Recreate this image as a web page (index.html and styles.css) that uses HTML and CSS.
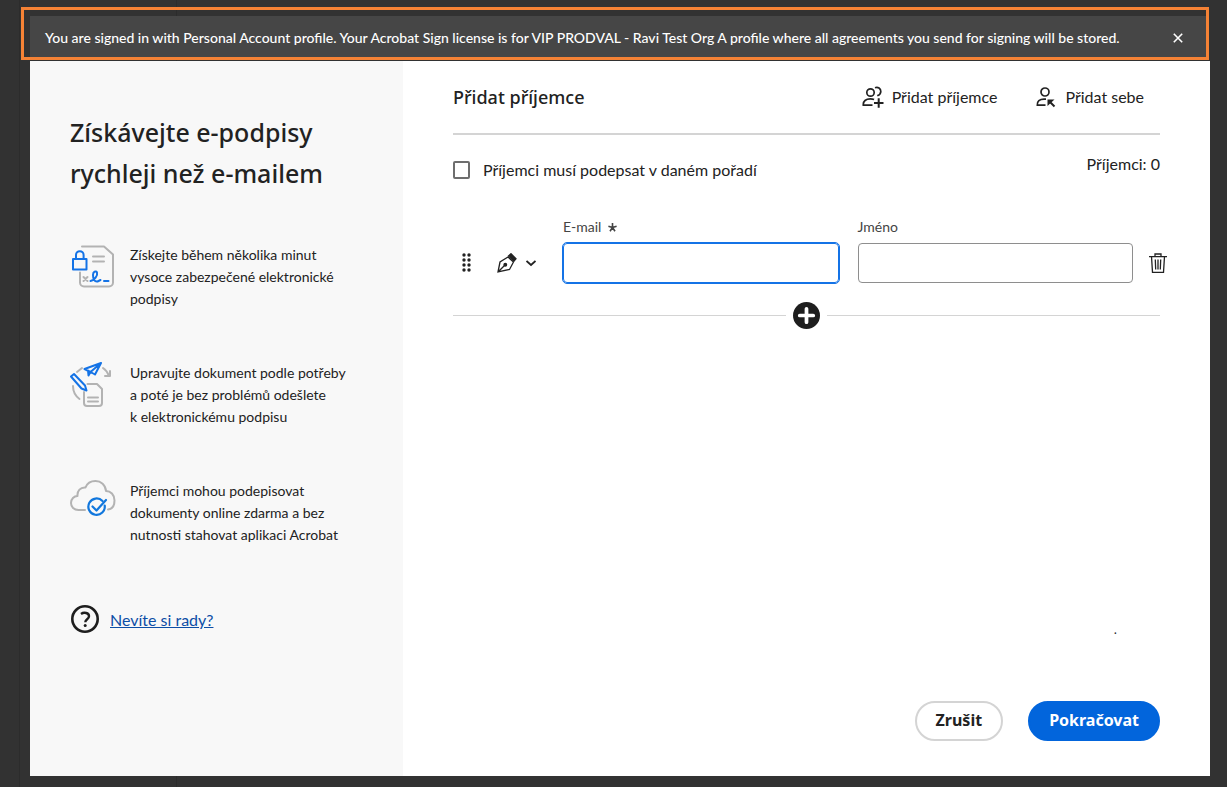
FILE: index.html
```html
<!DOCTYPE html>
<html lang="cs">
<head>
    <meta charset="UTF-8">
    <meta name="viewport" content="width=device-width, initial-scale=1.0">
    <title>Přidat příjemce</title>
    <link rel="stylesheet" href="styles.css">
</head>
<body>
    <div class="notice">
        <div class="notice-bar">
            <p class="notice-text">You are signed in with Personal Account profile. Your Acrobat Sign license is for VIP PRODVAL - Ravi Test Org A profile where all agreements you send for signing will be stored.</p>
            <button class="icon-btn" type="button" aria-label="Close">
                <svg width="10" height="10" viewBox="0 0 10 10" fill="none" stroke="#fff" stroke-width="1.6"><path d="M.8.8l8.4 8.4M9.2.8L.8 9.2"/></svg>
            </button>
        </div>
    </div>

    <div class="dialog">
        <aside class="side">
            <h1>Získávejte e-podpisy rychleji než e-mailem</h1>
            <ul class="features">
                <li>
                    <svg width="46" height="46" viewBox="0 0 46 46" fill="none" stroke-width="2" stroke-linecap="round" stroke-linejoin="round">
                        <g stroke="#b3b3b3">
                            <path d="M12 2.500h22l9 8v28a4 4 0 0 1-4 4H14a4 4 0 0 1-4-4v-10"/>
                            <path d="M23 12.500h11M23 17.500h11"/>
                            <path d="M13.500 33l4 4M17.500 33l-4 4"/>
                        </g>
                        <g stroke="#1473e6">
                            <path d="M3 15h13.500v10.500H3zM6 15v-4a3.800 3.800 0 0 1 7.600 0v4"/>
                            <path d="M20.500 37c4-1 7.500-5 6.500-8.500-1-2-4-1-4 2.500 0 4 1.500 7 4.500 6.500l3-1.500M34 37h4.500"/>
                        </g>
                    </svg>
                    <p>Získejte během několika minut vysoce zabezpečené elektronické podpisy</p>
                </li>
                <li>
                    <svg width="46" height="46" viewBox="0 0 46 46" fill="none" stroke-width="2" stroke-linecap="round" stroke-linejoin="round">
                        <g stroke="#b3b3b3">
                            <path d="M17.500 22H27l5 5v14a3 3 0 0 1-3 3H17a3 3 0 0 1-3-3V30"/>
                            <path d="M18 35.500h10M18 39.500h10"/>
                            <path d="M3 24c0 6 2.500 10 6.500 13M7 10l5-4"/>
                            <path d="M33 6c3 2 4.500 4 6 8M35 14h5V9"/>
                        </g>
                        <g stroke="#1473e6">
                            <path d="M1 14.500L4 12l11 11.500 1.500 5-5-2z"/>
                            <path d="M14.500 7L31 1l-6 11.500-4.500-2.500zM31 1L20.500 10l-2 3.500-.5-5"/>
                        </g>
                    </svg>
                    <p>Upravujte dokument podle potřeby a&nbsp;poté je bez problémů odešlete k&nbsp;elektronickému podpisu</p>
                </li>
                <li>
                    <svg width="46" height="46" viewBox="0 5 46 46" fill="none" stroke-width="2" stroke-linecap="round" stroke-linejoin="round">
                        <path stroke="#b3b3b3" d="M15 35H8.500C4 35 1 32 1 28c0-4 3-7 6.500-7-.5-5 3-9 8-8.500C17 8.500 21 6 25.500 6 31 6 35.500 10 36 16c4.500 0 8.500 3.500 8.500 9.500 0 5-2.500 8.500-6.500 9"/>
                        <g stroke="#1177dd" stroke-width="2.200">
                            <path d="M32.500 26a8.200 8.200 0 1 0 2.200 4.500"/>
                            <path d="M22.500 31.500l4 4L36 25"/>
                        </g>
                    </svg>
                    <p>Příjemci mohou podepisovat dokumenty online zdarma a&nbsp;bez nutnosti stahovat aplikaci Acrobat</p>
                </li>
            </ul>
            <div class="help">
                <svg width="30" height="30" viewBox="0 0 30 30" fill="none" stroke="#1e1e1e">
                    <circle cx="15" cy="15" r="12.700" stroke-width="2.600"/>
                    <path stroke-width="2.400" d="M11 10c3-2.200 8-1.200 8 2.200 0 3-3.700 3-3.700 6"/>
                    <circle cx="15.200" cy="21.500" r="1.500" fill="#1e1e1e" stroke="none"/>
                </svg>
                <a href="#">Nevíte si rady?</a>
            </div>
        </aside>

        <main class="main">
            <header class="main-head">
                <h2>Přidat příjemce</h2>
                <button class="text-btn" type="button">
                    <svg width="22" height="22" viewBox="0 0 22 22" fill="none" stroke="#222" stroke-width="1.700">
                        <circle cx="8.500" cy="6.500" r="3.700"/>
                        <path d="M10.500 19.200H1.300c-.4-4.200 2.700-6.300 7-6.300 1.500 0 2.700.2 3.800.7M13 1.700c3-1.200 5.800.8 5.800 3.700 0 2.300-1.500 3.500-3.500 4.400"/>
                        <path stroke-width="2" d="M16.700 12.300v9.400M12 17h9.500"/>
                    </svg>
                    Přidat příjemce
                </button>
                <button class="text-btn" type="button">
                    <svg width="22" height="22" viewBox="0 0 22 22" fill="none" stroke="#222" stroke-width="1.700">
                        <circle cx="10" cy="6" r="4"/>
                        <path d="M10.500 19.200H2.300c-.5-4 2.500-6.100 6.700-6.100h2"/>
                        <path stroke-width="2" d="M14.500 15.500l5 5"/>
                        <path fill="#222" stroke="none" d="M12.500 13.500h7l-7 6.500z"/>
                    </svg>
                    Přidat sebe
                </button>
            </header>

            <div class="options">
                <label class="order"><input type="checkbox">Příjemci musí podepsat v daném pořadí</label>
                <span class="count">Příjemci: 0</span>
            </div>

            <div class="recipient">
                <div class="tools">
                    <button class="icon-btn" type="button" aria-label="Přesunout">
                        <svg width="10" height="20" viewBox="0 0 10 20" fill="#222">
                            <circle cx="2" cy="2" r="1.700"/><circle cx="7" cy="2" r="1.700"/>
                            <circle cx="2" cy="7" r="1.700"/><circle cx="7" cy="7" r="1.700"/>
                            <circle cx="2" cy="12" r="1.700"/><circle cx="7" cy="12" r="1.700"/>
                            <circle cx="2" cy="17" r="1.700"/><circle cx="7" cy="17" r="1.700"/>
                        </svg>
                    </button>
                    <button class="icon-btn role" type="button" aria-label="Role">
                        <svg width="20" height="20" viewBox="0 0 20 20" fill="none" stroke="#222" stroke-width="1.300">
                            <path d="M1 19L3 9l8-5 5.500 5-4 7.500zM1 19l7-7"/>
                            <circle cx="8.300" cy="11.700" r="1.300" fill="#222"/>
                            <path fill="#222" d="M11.500 3l2.500-2.300 5 5L17 8z"/>
                        </svg>
                        <svg width="10" height="20" viewBox="0 0 10 20" fill="none" stroke="#222" stroke-width="1.800"><path d="M.5 8L5 12l4.500-4"/></svg>
                    </button>
                </div>
                <div class="field">
                    <label for="email">E-mail
                        <svg width="9" height="9" viewBox="0 0 9 9" stroke="#444" stroke-width="1.600"><path d="M4.500 4.500V0M4.500 4.500L.4 3.200M4.500 4.500l4.100-1.300M4.500 4.500L2 8.300M4.500 4.500L7 8.300"/></svg>
                    </label>
                    <input class="active" id="email" type="email" required>
                </div>
                <div class="field">
                    <label for="name">Jméno</label>
                    <input id="name" type="text">
                </div>
                <button class="icon-btn trash" type="button" aria-label="Odstranit">
                    <svg width="18" height="20" viewBox="0 0 18 20" fill="none" stroke="#222" stroke-width="1.300">
                        <path d="M0 3.600h18M6 3.500V1h6v2.500M2.500 3.500l1 15.800h11l1-15.800M6.300 6.500l.4 10M9 6.500v10M11.700 6.500l-.4 10"/>
                    </svg>
                </button>
            </div>

            <div class="add-row">
                <button class="icon-btn" type="button" aria-label="Přidat další">
                    <svg width="27" height="27" viewBox="0 0 26 26"><circle cx="13" cy="13" r="13" fill="#1e1e1e"/><path stroke="#fff" stroke-width="3.600" stroke-linecap="round" d="M13 6.500v13M6.500 13h13"/></svg>
                </button>
            </div>

            <p class="status">.</p>

            <footer class="actions">
                <button class="btn" type="button">Zrušit</button>
                <button class="btn primary" type="button">Pokračovat</button>
            </footer>
        </main>
    </div>
</body>
</html>
```
FILE: styles.css
```css
* {
    box-sizing: border-box;
}
body {
    display: flex;
    flex-direction: column;
    min-height: 100vh;
    margin: 0;
    padding: 7px 17px 11px 21px;
    background: linear-gradient(to right, transparent 19px, #2c2c2c 19px, #2c2c2c 20px, transparent 20px, transparent 176px, #2c2c2c 176px, #2c2c2c 177px, transparent 177px) #323232;
    color: #222;
    font-family: "Noto Sans", "Open Sans", sans-serif;
    font-size: 16px;
}
h1, h2, p, ul {
    margin: 0;
    padding: 0;
}
h1, h2 {
    font-weight: 500;
}
button {
    font-family: inherit;
    color: inherit;
    cursor: pointer;
}
svg {
    flex: none;
}
.icon-btn {
    display: flex;
    align-items: center;
    padding: 0;
    border: 0;
    background: none;
}

.notice {
    margin-right: 1px;
    padding: 6px 0 0 6px;
    border: 3px solid #f58235;
}
.notice-bar {
    display: flex;
    align-items: center;
    justify-content: space-between;
    padding: 12px 23px 9px 15px;
    background: #464646;
    color: #fff;
}
.notice-text {
    font-family: Lato, sans-serif;
    font-size: 14px;
    font-weight: 500;
    line-height: 20px;
}

.dialog {
    display: flex;
    flex: 1;
    margin: 1px 0 0 9px;
    background: #fff;
}
.side {
    flex: none;
    width: 373px;
    padding: 51px 40px;
    background: #f8f8f8;
}
.side h1 {
    font-size: 25px;
    line-height: 41px;
}
.features {
    display: grid;
    gap: 52px;
    margin-top: 50px;
    list-style: none;
}
.features li {
    display: flex;
    gap: 14px;
    max-width: 280px;
    font-family: Lato, sans-serif;
    font-size: 14px;
    line-height: 22px;
}
.help {
    display: flex;
    align-items: center;
    gap: 10px;
    margin-top: 58px;
    font-family: Lato, sans-serif;
}
.help a {
    color: #0d4ea6;
}

.main {
    display: flex;
    flex: 1;
    flex-direction: column;
    padding: 12px 50px 35px;
}
.main-head {
    display: flex;
    align-items: center;
    gap: 38px;
    height: 62px;
    padding: 0 16px 13px 0;
    border-bottom: 2px solid #d4d4d4;
}
.main-head h2 {
    margin-right: auto;
    font-size: 18px;
}
.text-btn {
    display: flex;
    align-items: center;
    gap: 8px;
    padding: 0;
    border: 0;
    background: none;
    font-family: Lato, sans-serif;
    font-size: 16px;
}
.options {
    display: flex;
    justify-content: space-between;
    margin-top: 17px;
    font-family: Lato, sans-serif;
    line-height: 24px;
}
.order {
    display: flex;
    align-items: center;
    gap: 13px;
    margin-top: 6px;
}
.order input {
    appearance: none;
    width: 17px;
    height: 18px;
    margin: 0;
    border: 2px solid #6e6e6e;
    border-radius: 2px;
}

.recipient {
    display: flex;
    align-items: flex-end;
    gap: 19px;
    margin: 35px -7px 0 0;
}
.tools {
    display: flex;
    align-items: center;
    gap: 25px;
    width: 91px;
    height: 40px;
    padding-left: 9px;
}
.role {
    gap: 9px;
}
.field {
    flex: 1;
}
.field label {
    display: flex;
    align-items: center;
    gap: 7px;
    margin-bottom: 6px;
    color: #444;
    font-family: Lato, sans-serif;
    font-size: 14px;
    line-height: 20px;
}
.field input {
    display: block;
    width: 100%;
    height: 40px;
    padding: 0 12px;
    border: 1px solid #8e8e8e;
    border-radius: 4px;
    font-size: 16px;
}
.field input.active {
    border-color: #1473e6;
    outline: 1px solid #1473e6;
}
.trash {
    height: 40px;
    margin-left: -3px;
}
.add-row {
    display: flex;
    align-items: center;
    gap: 7px;
    margin-top: 19px;
}
.add-row::before,
.add-row::after {
    content: "";
    flex: 1;
    height: 1px;
    background: #d4d4d4;
}

.status {
    margin-top: auto;
    padding-right: 43px;
    font-size: 12px;
    line-height: 16px;
    text-align: right;
}
.actions {
    display: flex;
    justify-content: flex-end;
    gap: 25px;
    margin-top: 63px;
}
.btn {
    height: 40px;
    padding: 0 19px 2px;
    border: 2px solid #d4d4d4;
    border-radius: 20px;
    background: #fff;
    font-size: 16px;
    font-weight: 700;
}
.primary {
    border-color: #0265dc;
    background: #0265dc;
    color: #fff;
}
```
